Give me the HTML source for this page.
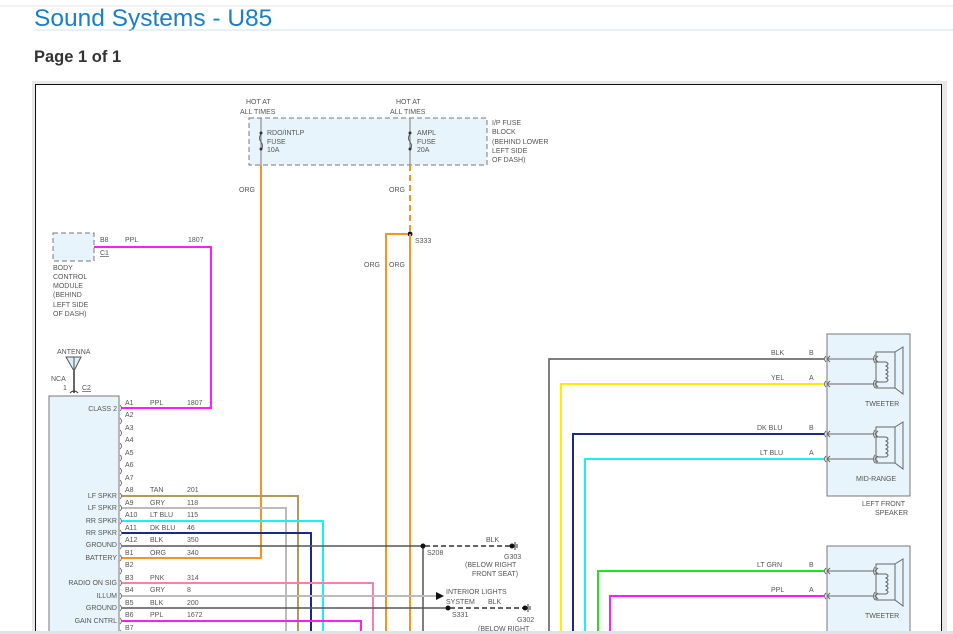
<!DOCTYPE html>
<html><head><meta charset="utf-8"><style>
html,body{margin:0;padding:0;background:#fff;width:953px;height:634px;overflow:hidden}
svg{display:block}
text{font-family:"Liberation Sans",sans-serif;font-size:7px;fill:#555}
</style></head><body>
<svg width="953" height="634" viewBox="0 0 953 634" xmlns="http://www.w3.org/2000/svg">
<line x1="0" y1="6" x2="953" y2="6" stroke="#e6e6e6"/>
<text x="34" y="26" style="font-size:24.5px;fill:#1a7fc8">Sound Systems - U85</text>
<line x1="34" y1="30" x2="953" y2="30" stroke="#cfe3f1"/>
<text x="34" y="62" style="font-size:16.5px;fill:#333;font-weight:bold">Page 1 of 1</text>
<rect x="32" y="81" width="915" height="560" fill="#e8e8e8"/>
<rect x="35.5" y="84.5" width="906" height="560" fill="#fff" stroke="#111"/>
<!-- fuse block -->
<rect x="249" y="118" width="238" height="47" fill="#e8f4fb" stroke="#777" stroke-dasharray="5,3"/>
<text x="246" y="104">HOT AT</text><text x="240" y="114">ALL TIMES</text>
<text x="396" y="104">HOT AT</text><text x="390" y="114">ALL TIMES</text>
<line x1="261" y1="118" x2="261" y2="165" stroke="#777"/>
<line x1="410" y1="118" x2="410" y2="165" stroke="#777"/>
<path d="M261 134 q-3 4 0 8 q3 4 0 8" fill="none" stroke="#555"/>
<path d="M410 134 q-3 4 0 8 q3 4 0 8" fill="none" stroke="#555"/>
<circle cx="261" cy="133" r="1.5" fill="#333"/><circle cx="261" cy="149" r="1.5" fill="#333"/>
<circle cx="410" cy="133" r="1.5" fill="#333"/><circle cx="410" cy="149" r="1.5" fill="#333"/>
<text x="267" y="135">RDO/INTLP</text><text x="267" y="144">FUSE</text><text x="267" y="152">10A</text>
<text x="417" y="135">AMPL</text><text x="417" y="144">FUSE</text><text x="417" y="152">20A</text>
<text x="492" y="125">I/P FUSE</text><text x="492" y="134">BLOCK</text><text x="492" y="144">(BEHIND LOWER</text><text x="492" y="153">LEFT SIDE</text><text x="492" y="162">OF DASH)</text>
<text x="239" y="192">ORG</text><text x="389" y="192">ORG</text>
<text x="364" y="267">ORG</text><text x="389" y="267">ORG</text>
<line x1="410" y1="165" x2="410" y2="234" stroke="#f7931e" stroke-width="2" stroke-dasharray="6,4"/>
<circle cx="410" cy="234" r="2.5" fill="#111"/><text x="415" y="243">S333</text>
<!-- orange wires -->
<path d="M261 165 V558 H122" fill="none" stroke="#f7931e" stroke-width="2"/>
<path d="M410 234 V634" fill="none" stroke="#f7931e" stroke-width="2"/>
<path d="M408 234 H386 V634" fill="none" stroke="#f7931e" stroke-width="2"/>
<!-- BCM -->
<rect x="53" y="233" width="41" height="28" fill="#e8f4fb" stroke="#777" stroke-dasharray="5,3"/>
<text x="100" y="242">B8</text><text x="125" y="242">PPL</text><text x="188" y="242">1807</text>
<text x="100" y="255" style="text-decoration:underline">C1</text>
<text x="53" y="270">BODY</text><text x="53" y="279">CONTROL</text><text x="53" y="288">MODULE</text><text x="53" y="297">(BEHIND</text><text x="53" y="307">LEFT SIDE</text><text x="53" y="316">OF DASH)</text>
<path d="M94 247 H211 V408 H122" fill="none" stroke="#ff1dff" stroke-width="2"/>
<!-- antenna -->
<text x="57" y="354">ANTENNA</text>
<path d="M66 357 L74 371 L81 357 Z M74 357 V371" fill="#dbeef7" stroke="#555"/>
<line x1="74" y1="371" x2="74" y2="393" stroke="#333" stroke-width="1.5"/>
<path d="M70 393 q4 -4 8 0" fill="none" stroke="#333"/>
<text x="51" y="381">NCA</text><text x="63" y="390">1</text>
<text x="82" y="390" style="text-decoration:underline">C2</text>
<!-- radio -->
<rect x="49" y="396" width="70" height="250" fill="#e8f4fb" stroke="#777"/>
<g text-anchor="end">
<text x="117" y="411">CLASS 2</text><text x="117" y="498">LF SPKR</text><text x="117" y="510">LF SPKR</text>
<text x="117" y="523">RR SPKR</text><text x="117" y="535">RR SPKR</text><text x="117" y="547">GROUND</text>
<text x="117" y="560">BATTERY</text><text x="117" y="585">RADIO ON SIG</text><text x="117" y="598">ILLUM</text>
<text x="117" y="610">GROUND</text><text x="117" y="623">GAIN CNTRL</text>
</g>
<g>
<text x="125" y="405">A1</text><text x="125" y="417">A2</text><text x="125" y="430">A3</text><text x="125" y="442">A4</text>
<text x="125" y="455">A5</text><text x="125" y="467">A6</text><text x="125" y="480">A7</text><text x="125" y="492">A8</text>
<text x="125" y="505">A9</text><text x="125" y="517">A10</text><text x="125" y="530">A11</text><text x="125" y="542">A12</text>
<text x="125" y="555">B1</text><text x="125" y="567">B2</text><text x="125" y="580">B3</text><text x="125" y="592">B4</text>
<text x="125" y="605">B5</text><text x="125" y="617">B6</text><text x="125" y="630">B7</text>
<text x="150" y="405">PPL</text><text x="187" y="405">1807</text>
<text x="150" y="492">TAN</text><text x="187" y="492">201</text>
<text x="150" y="505">GRY</text><text x="187" y="505">118</text>
<text x="150" y="517">LT BLU</text><text x="187" y="517">115</text>
<text x="150" y="530">DK BLU</text><text x="187" y="530">46</text>
<text x="150" y="542">BLK</text><text x="187" y="542">350</text>
<text x="150" y="555">ORG</text><text x="187" y="555">340</text>
<text x="150" y="580">PNK</text><text x="187" y="580">314</text>
<text x="150" y="592">GRY</text><text x="187" y="592">8</text>
<text x="150" y="605">BLK</text><text x="187" y="605">200</text>
<text x="150" y="617">PPL</text><text x="187" y="617">1672</text>
</g>
<g fill="none" stroke="#555" stroke-width="0.8">
<path d="M120 405 q3 3 0 6 M120 418 q3 3 0 6 M120 430 q3 3 0 6 M120 443 q3 3 0 6 M120 455 q3 3 0 6 M120 468 q3 3 0 6 M120 480 q3 3 0 6 M120 493 q3 3 0 6 M120 505 q3 3 0 6 M120 518 q3 3 0 6 M120 530 q3 3 0 6 M120 543 q3 3 0 6 M120 555 q3 3 0 6 M120 568 q3 3 0 6 M120 580 q3 3 0 6 M120 593 q3 3 0 6 M120 605 q3 3 0 6 M120 618 q3 3 0 6 M120 630 q3 3 0 6"/>
</g>
<g fill="none" stroke-width="2">
<path d="M122 496 H298 V634" stroke="#b39a5b"/>
<path d="M122 508 H286 V634" stroke="#bbb"/>
<path d="M122 521 H323 V634" stroke="#19f0f0"/>
<path d="M122 533 H311 V634" stroke="#1a2a8a"/>
<path d="M122 546 H423 V634" stroke="#555" stroke-width="1.5"/>
<path d="M122 583 H373 V634" stroke="#ff7fa8"/>
<path d="M122 596 H437" stroke="#bbb"/>
<path d="M122 608 H448" stroke="#555" stroke-width="1.5"/>
<path d="M122 621 H361 V634" stroke="#ff1dff"/>
</g>
<circle cx="423" cy="546" r="2.5" fill="#111"/><text x="427" y="555">S208</text>
<line x1="425" y1="546" x2="512" y2="546" stroke="#333" stroke-width="1.5" stroke-dasharray="5,3"/>
<circle cx="512" cy="546" r="2.5" fill="#111"/><path d="M515 542 V550 M517 544 V548" stroke="#333"/>
<text x="486" y="542">BLK</text><text x="504" y="559">G303</text>
<text x="465" y="567">(BELOW RIGHT</text><text x="472" y="576">FRONT SEAT)</text>
<path d="M436 592 L444 596 L436 600 Z" fill="#111"/>
<text x="446" y="594">INTERIOR LIGHTS</text><text x="446" y="604">SYSTEM</text><text x="488" y="604">BLK</text>
<circle cx="448" cy="608" r="2.5" fill="#111"/><text x="452" y="617">S331</text>
<line x1="450" y1="608" x2="525" y2="608" stroke="#333" stroke-width="1.5" stroke-dasharray="5,3"/>
<circle cx="525" cy="608" r="2.5" fill="#111"/><path d="M528 604 V612 M530 606 V610" stroke="#333"/>
<text x="517" y="622">G302</text><text x="478" y="631">(BELOW RIGHT</text>
<!-- right side -->
<g fill="none" stroke-width="2">
<path d="M824 359 H549 V634" stroke="#555" stroke-width="1.5"/>
<path d="M824 384 H561 V634" stroke="#ffee00"/>
<path d="M824 434 H573 V634" stroke="#1a2a8a"/>
<path d="M824 459 H585 V634" stroke="#19f0f0"/>
<path d="M824 571 H598 V634" stroke="#22e022"/>
<path d="M824 596 H610 V634" stroke="#ff1dff"/>
</g>
<text x="771" y="355">BLK</text><text x="809" y="355">B</text>
<text x="771" y="380">YEL</text><text x="809" y="380">A</text>
<text x="757" y="430">DK BLU</text><text x="809" y="430">B</text>
<text x="760" y="455">LT BLU</text><text x="809" y="455">A</text>
<text x="757" y="567">LT GRN</text><text x="809" y="567">B</text>
<text x="771" y="592">PPL</text><text x="809" y="592">A</text>
<rect x="827" y="334" width="83" height="162" fill="#e8f4fb" stroke="#777"/>
<rect x="827" y="546" width="83" height="100" fill="#e8f4fb" stroke="#777"/>
<g id="spk" fill="none" stroke="#666">
<path d="M826 356 q-3 3 0 6 M830 356 l-3 3 l3 3 M826 381 q-3 3 0 6 M830 381 l-3 3 l3 3"/>
<path d="M828 359 H873 M828 384 H873"/>
<path d="M875 355 q-3 4 0 8 M875 380 q-3 4 0 8 M878 356 l-3 3 l3 3 M878 381 l-3 3 l3 3"/>
<rect x="876" y="352" width="19" height="36"/>
<path d="M895 352 L903 347 V394 L895 388"/>
<path d="M886 362 q4 2 0 4 q4 2 0 4 q4 2 0 4 q4 2 0 4 q4 2 0 4 M876 362 H886 M876 382 H886"/>
</g>
<use href="#spk" transform="translate(0,75)"/>
<use href="#spk" transform="translate(0,212)"/>
<text x="865" y="406">TWEETER</text><text x="856" y="481">MID-RANGE</text>
<text x="862" y="506">LEFT FRONT</text><text x="875" y="515">SPEAKER</text>
<text x="865" y="618">TWEETER</text>
<rect x="0" y="631" width="953" height="3" fill="#dde3e8"/>
</svg>
</body></html>
